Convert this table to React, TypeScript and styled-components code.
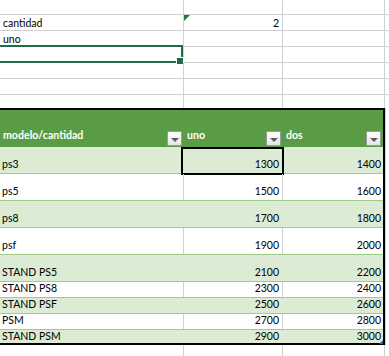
import * as React from "react";
import styled, { createGlobalStyle } from "styled-components";

const GlobalStyle = createGlobalStyle`
  html, body {
    margin: 0;
    padding: 0;
    background: #ffffff;
  }
  body {
    width: 389px;
    height: 356px;
    overflow: hidden;
    font-family: Lato, "Liberation Sans", sans-serif;
    color: #000;
  }
`;

const GRID = "#d0d0d0";
const EXCEL_GREEN = "#1f6e43";
const HEADER_GREEN = "#5a9c46";
const BAND = "#dcebd4";
const BAND_LINE = "#9fcd87";

const Sheet = styled.div`
  display: flex;
  flex-direction: column;
  width: 389px;
`;

const GridRow = styled.div<{ $height: number; $noLine?: boolean }>`
  display: grid;
  grid-template-columns: 184px 99px 102px 1fr;
  height: ${(p) => p.$height}px;
  box-sizing: border-box;
  border-bottom: ${(p) => (p.$noLine ? "none" : `1px solid ${GRID}`)};
`;

const Cell = styled.div<{ $right?: boolean }>`
  position: relative;
  display: flex;
  align-items: flex-end;
  justify-content: ${(p) => (p.$right ? "flex-end" : "flex-start")};
  box-sizing: border-box;
  border-right: 1px solid ${GRID};
  padding: 0 3px 1px 3px;
  font-size: 10.5px;
  line-height: 12px;
  white-space: nowrap;
`;

const ErrorMark = styled.span`
  position: absolute;
  top: 0;
  left: 0;
  width: 6px;
  height: 6px;
  background: #1e7b35;
  clip-path: polygon(0 0, 100% 0, 0 100%);
`;

const ActiveFrame = styled.div`
  position: absolute;
  top: -2px;
  left: -4px;
  right: 0;
  height: 18px;
  box-sizing: border-box;
  border: 2px solid ${EXCEL_GREEN};
  pointer-events: none;
`;

const FillHandle = styled.span`
  position: absolute;
  right: -3px;
  bottom: -4px;
  width: 6px;
  height: 6px;
  background: ${EXCEL_GREEN};
  border: 1px solid #fff;
`;

const TableArea = styled.div`
  display: flex;
`;

const Table = styled.div`
  position: relative;
  width: 385px;
  box-sizing: border-box;
  border-top: 2px solid #000;
  border-right: 2px solid #000;
  border-bottom: 2px solid #000;
`;

const Gutter = styled.div`
  flex: 1;
  border-left: 1px solid ${GRID};
`;

const HeaderRow = styled.div`
  display: grid;
  grid-template-columns: 184px 99px 100px;
  height: 37px;
  background: ${HEADER_GREEN};
`;

const HeaderCell = styled.div`
  display: flex;
  align-items: flex-end;
  justify-content: space-between;
  padding: 0 2px 1px 3px;
  color: #fff;
  font-weight: 700;
  font-size: 10.6px;
  line-height: 12px;
`;

const HeaderLabel = styled.span`
  padding-bottom: 5px;
`;

const FilterButton = styled.span`
  display: flex;
  align-items: center;
  justify-content: center;
  width: 15px;
  height: 15px;
  box-sizing: border-box;
  border: 1px solid #9a9a9a;
  border-radius: 1px;
  background: linear-gradient(#ffffff, #e4e4e4);
  padding-top: 2px;
`;

const Caret = styled.span`
  width: 0;
  height: 0;
  border-left: 4px solid transparent;
  border-right: 4px solid transparent;
  border-top: 4px solid #5c5c5c;
`;

const BodyRow = styled.div<{ $height: number; $band: boolean; $last: boolean }>`
  display: grid;
  grid-template-columns: 184px 99px 100px;
  height: ${(p) => p.$height}px;
  box-sizing: border-box;
  background: ${(p) => (p.$band ? BAND : "#fff")};
  border-bottom: ${(p) => (p.$last ? "none" : `1px solid ${BAND_LINE}`)};
`;

const BodyCell = styled.div<{
  $num?: boolean;
  $lined: boolean;
  $pad: number;
  $padRight?: number;
}>`
  position: relative;
  display: flex;
  align-items: flex-end;
  justify-content: ${(p) => (p.$num ? "flex-end" : "flex-start")};
  box-sizing: border-box;
  border-right: 1px solid ${(p) => (p.$lined ? GRID : "transparent")};
  padding: 0 ${(p) => p.$padRight ?? 2}px ${(p) => p.$pad}px 2px;
  font-size: 10.5px;
  line-height: 12px;
  white-space: nowrap;
`;

const LastBodyCell = styled(BodyCell)`
  border-right: none;
`;

const CellFrame = styled.div`
  position: absolute;
  top: 0;
  left: -3px;
  width: 103px;
  height: 28px;
  box-sizing: border-box;
  border: 2px solid #000;
  pointer-events: none;
`;

const ResizeHandle = styled.span`
  position: absolute;
  right: 0;
  bottom: -1px;
  width: 4px;
  height: 4px;
  background: #3b5bc4;
  clip-path: polygon(100% 0, 100% 100%, 0 100%);
`;

interface Row {
  model: string;
  uno: number;
  dos: number;
  height: number;
}

const rows: Row[] = [
  { model: "ps3", uno: 1300, dos: 1400, height: 27 },
  { model: "ps5", uno: 1500, dos: 1600, height: 27 },
  { model: "ps8", uno: 1700, dos: 1800, height: 27 },
  { model: "psf", uno: 1900, dos: 2000, height: 27 },
  { model: "STAND PS5", uno: 2100, dos: 2200, height: 27 },
  { model: "STAND PS8", uno: 2300, dos: 2400, height: 16 },
  { model: "STAND PSF", uno: 2500, dos: 2600, height: 16 },
  { model: "PSM", uno: 2700, dos: 2800, height: 16 },
  { model: "STAND PSM", uno: 2900, dos: 3000, height: 13 },
];

const EmptyCells = () => (
  <>
    <Cell />
    <Cell />
    <Cell />
    <Cell />
  </>
);

const Filter = () => (
  <FilterButton>
    <Caret />
  </FilterButton>
);

const App: React.FC = () => {
  return (
    <Sheet>
      <GlobalStyle />
      <GridRow $height={15}>
        <EmptyCells />
      </GridRow>
      <GridRow $height={16}>
        <Cell>cantidad</Cell>
        <Cell $right>
          <ErrorMark />2
        </Cell>
        <Cell />
        <Cell />
      </GridRow>
      <GridRow $height={16}>
        <Cell>uno</Cell>
        <Cell />
        <Cell />
        <Cell />
      </GridRow>
      <GridRow $height={16}>
        <Cell>
          <ActiveFrame>
            <FillHandle />
          </ActiveFrame>
        </Cell>
        <Cell />
        <Cell />
        <Cell />
      </GridRow>
      <GridRow $height={16}>
        <EmptyCells />
      </GridRow>
      <GridRow $height={16}>
        <EmptyCells />
      </GridRow>
      <GridRow $height={13} $noLine>
        <EmptyCells />
      </GridRow>

      <TableArea>
        <Table>
          <HeaderRow>
            <HeaderCell>
              <HeaderLabel>modelo/cantidad</HeaderLabel>
              <Filter />
            </HeaderCell>
            <HeaderCell>
              <HeaderLabel>uno</HeaderLabel>
              <Filter />
            </HeaderCell>
            <HeaderCell>
              <HeaderLabel>dos</HeaderLabel>
              <Filter />
            </HeaderCell>
          </HeaderRow>
          {rows.map((row, index) => {
            const band = index % 2 === 0;
            const last = index === rows.length - 1;
            const pad = last ? 1 : 3;
            return (
              <BodyRow key={row.model} $height={row.height} $band={band} $last={last}>
                <BodyCell $lined={!band} $pad={pad}>
                  {row.model}
                </BodyCell>
                <BodyCell $num $lined={!band} $pad={pad} $padRight={3}>
                  {index === 0 && <CellFrame />}
                  {row.uno}
                </BodyCell>
                <LastBodyCell $num $lined={false} $pad={pad}>
                  {row.dos}
                </LastBodyCell>
              </BodyRow>
            );
          })}
          <ResizeHandle />
        </Table>
        <Gutter />
      </TableArea>

      <GridRow $height={12} $noLine>
        <EmptyCells />
      </GridRow>
    </Sheet>
  );
};

export default App;
